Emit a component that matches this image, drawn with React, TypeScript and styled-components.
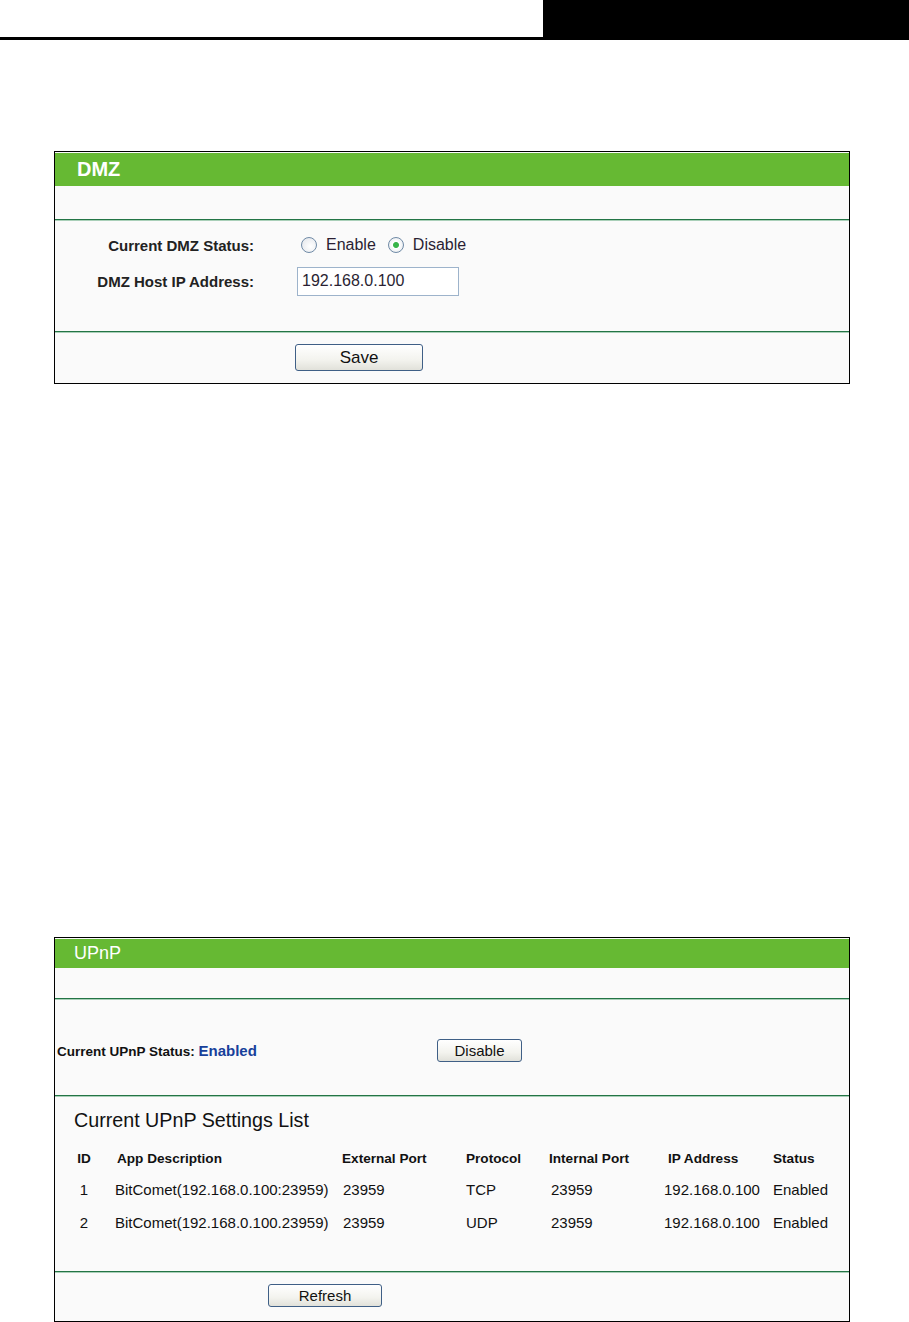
import React from 'react'
import styled, { createGlobalStyle } from 'styled-components'

const GlobalStyle = createGlobalStyle`
  html, body {
    margin: 0;
    padding: 0;
    background: #ffffff;
  }
  body {
    font-family: "Liberation Sans", Arial, sans-serif;
    color: #1c1c1c;
  }
`

const Page = styled.div`
  width: 909px;
  height: 1322px;
  display: flex;
  flex-direction: column;
`

const TopBar = styled.div`
  height: 38px;
  display: flex;
  justify-content: flex-end;
  border-bottom: 3px solid #000;
`

const TopBlock = styled.div`
  width: 366px;
  background: #000;
`

const Panel = styled.section<{ $top: number }>`
  margin: ${p => p.$top}px 0 0 54px;
  width: 796px;
  box-sizing: border-box;
  border: 1px solid #000;
  background: #fafafa;
  display: flex;
  flex-direction: column;
`

const Header = styled.div<{ $h: number }>`
  height: ${p => p.$h}px;
  margin-top: 1px;
  background: #66b933;
  color: #fff;
  display: flex;
  align-items: center;
`

const HeaderTitle = styled.h2<{ $bold?: boolean; $pad: number }>`
  margin: 0;
  padding-left: ${p => p.$pad}px;
  font-size: ${p => (p.$bold ? 20 : 18)}px;
  font-weight: ${p => (p.$bold ? 700 : 400)};
`

const Spacer = styled.div<{ $h: number }>`
  height: ${p => p.$h}px;
`

const Divider = styled.div`
  height: 1px;
  background: #237445;
  border-bottom: 1px solid #a9cfb8;
`

const FormSection = styled.div`
  padding: 6px 0 32px;
  display: flex;
  flex-direction: column;
`

const FormRow = styled.div`
  height: 36px;
  display: grid;
  grid-template-columns: 199px 1fr;
  column-gap: 43px;
  align-items: center;
`

const Label = styled.label`
  text-align: right;
  font-size: 15px;
  font-weight: 700;
  color: #222;
`

const Controls = styled.div`
  display: flex;
  align-items: center;
  font-size: 16px;
  color: #2a1f33;
`

const RadioOption = styled.span`
  display: inline-flex;
  align-items: center;
  gap: 9px;
  margin: 0 8px 0 4px;
`

const RadioDot = styled.span<{ $checked?: boolean }>`
  width: 16px;
  height: 16px;
  box-sizing: border-box;
  border-radius: 50%;
  border: 1px solid #6f8aa6;
  background: ${p =>
    p.$checked
      ? 'radial-gradient(circle, #39b54a 0 2.5px, #ffffff 3.5px, #dfe3e8 100%)'
      : 'radial-gradient(circle at 60% 60%, #ffffff 0, #e0e3e8 100%)'};
`

const TextInput = styled.input`
  width: 162px;
  height: 29px;
  box-sizing: border-box;
  margin-left: 0;
  padding: 0 4px;
  border: 1px solid #9db3cb;
  background: #fff;
  font-family: "Liberation Sans", Arial, sans-serif;
  font-size: 16px;
  color: #2a1f33;
`

const Footer = styled.div<{ $pad: number; $left: number; $h: number }>`
  height: ${p => p.$h}px;
  padding: ${p => p.$pad}px 0 0 ${p => p.$left}px;
  box-sizing: border-box;
`

const Button = styled.button<{ $w: number; $h: number; $fs: number }>`
  width: ${p => p.$w}px;
  height: ${p => p.$h}px;
  padding: 0;
  border: 1px solid #3f5f86;
  border-radius: 3px;
  background: linear-gradient(#ffffff, #f3f3ee 60%, #e1e1da);
  font-family: "Liberation Sans", Arial, sans-serif;
  font-size: ${p => p.$fs}px;
  color: #111;
`

const StatusSection = styled.div`
  height: 95px;
  box-sizing: border-box;
  padding: 6px 0 0 2px;
  display: flex;
  align-items: center;
`

const StatusLabel = styled.span`
  width: 380px;
  font-size: 13.5px;
  font-weight: 700;
  color: #111;
`

const StatusValue = styled.span`
  color: #17409a;
  font-size: 15px;
`

const ListSection = styled.div`
  padding: 10px 0 32px 19px;
`

const ListTitle = styled.h3`
  margin: 0 0 10px;
  font-size: 19.7px;
  font-weight: 400;
  line-height: 26px;
  color: #111;
`

const Grid = styled.div`
  display: grid;
  grid-template-columns: 20px 246px 124px 83px 115px 109px 1fr;
`

const Cell = styled.div<{ $head?: boolean; $center?: boolean; $pad?: number }>`
  height: ${p => (p.$head ? 30 : 33)}px;
  display: flex;
  align-items: center;
  justify-content: ${p => (p.$center ? 'center' : 'flex-start')};
  padding-left: ${p => p.$pad ?? 2}px;
  font-size: ${p => (p.$head ? 13.6 : 15)}px;
  font-weight: ${p => (p.$head ? 700 : 400)};
  color: #111;
  white-space: nowrap;
`

const columns = ['ID', 'App Description', 'External Port', 'Protocol', 'Internal Port', 'IP Address', 'Status']
const headPad = [0, 23, 2, 2, 2, 6, 2]
const rowPad = [0, 21, 3, 2, 4, 2, 2]

const rows = [
  ['1', 'BitComet(192.168.0.100:23959)', '23959', 'TCP', '23959', '192.168.0.100', 'Enabled'],
  ['2', 'BitComet(192.168.0.100.23959)', '23959', 'UDP', '23959', '192.168.0.100', 'Enabled'],
]

export default function App() {
  return (
    <>
      <GlobalStyle />
      <Page>
        <TopBar>
          <TopBlock />
        </TopBar>

        <Panel $top={111}>
          <Header $h={33}>
            <HeaderTitle $bold $pad={22}>DMZ</HeaderTitle>
          </Header>
          <Spacer $h={33} />
          <Divider />
          <FormSection>
            <FormRow>
              <Label>Current DMZ Status:</Label>
              <Controls>
                <RadioOption>
                  <RadioDot />
                  Enable
                </RadioOption>
                <RadioOption>
                  <RadioDot $checked />
                  Disable
                </RadioOption>
              </Controls>
            </FormRow>
            <FormRow>
              <Label>DMZ Host IP Address:</Label>
              <Controls>
                <TextInput defaultValue="192.168.0.100" />
              </Controls>
            </FormRow>
          </FormSection>
          <Divider />
          <Footer $pad={11} $left={240} $h={50}>
            <Button $w={128} $h={27} $fs={17}>Save</Button>
          </Footer>
        </Panel>

        <Panel $top={553}>
          <Header $h={29}>
            <HeaderTitle $pad={19}>UPnP</HeaderTitle>
          </Header>
          <Spacer $h={30} />
          <Divider />
          <StatusSection>
            <StatusLabel>
              Current UPnP Status: <StatusValue>Enabled</StatusValue>
            </StatusLabel>
            <Button $w={85} $h={23} $fs={15}>Disable</Button>
          </StatusSection>
          <Divider />
          <ListSection>
            <ListTitle>Current UPnP Settings List</ListTitle>
            <Grid>
              {columns.map((c, i) => (
                <Cell key={c} $head $center={i === 0} $pad={headPad[i]}>{c}</Cell>
              ))}
              {rows.map(r =>
                r.map((v, i) => (
                  <Cell key={r[0] + '-' + i} $center={i === 0} $pad={rowPad[i]}>{v}</Cell>
                ))
              )}
            </Grid>
          </ListSection>
          <Divider />
          <Footer $pad={11} $left={213} $h={48}>
            <Button $w={114} $h={23} $fs={15}>Refresh</Button>
          </Footer>
        </Panel>
      </Page>
    </>
  )
}
